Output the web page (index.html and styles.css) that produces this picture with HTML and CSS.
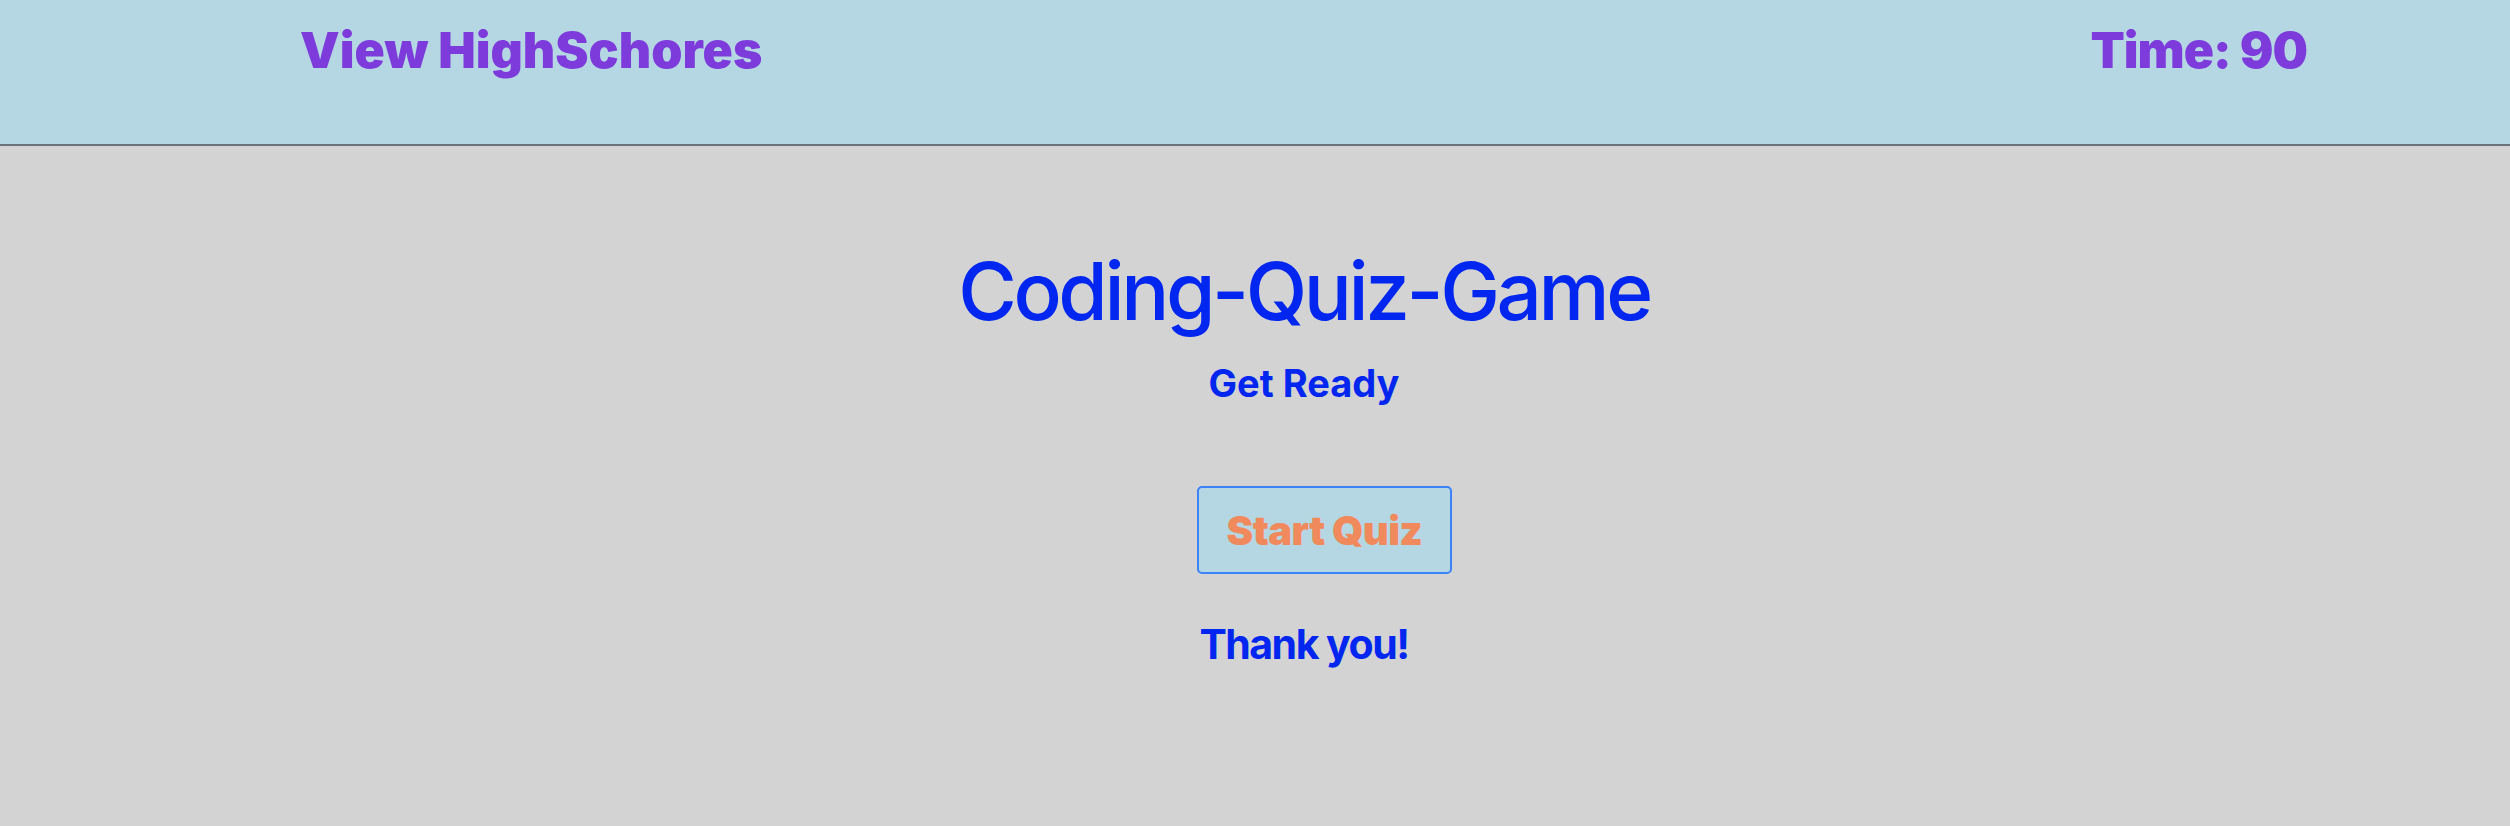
FILE: index.html
```html
<!DOCTYPE html>
<html lang="en">
<head>
<meta charset="utf-8">
<title>Coding-Quiz-Game</title>
<link rel="stylesheet" href="styles.css">
</head>
<body>
<header class="topbar">
  <a class="highscores" href="#">View HighSchores</a>
  <span class="timer">Time: 90</span>
</header>
<main class="stage">
  <h1 class="title">Coding-Quiz-Game</h1>
  <h2 class="subtitle">Get Ready</h2>
  <div class="quiz">
    <button class="start-btn" type="button">Start Quiz</button>
    <p class="thanks">Thank you!</p>
  </div>
</main>
</body>
</html>
```
FILE: styles.css
```css
html, body {
  margin: 0;
  padding: 0;
}
body {
  background: #d3d3d3;
  font-family: Inter, "Noto Sans", sans-serif;
  min-height: 826px;
}
.topbar {
  display: flex;
  justify-content: space-between;
  align-items: flex-start;
  height: 146px;
  box-sizing: border-box;
  padding: 20px 203px 0 300px;
  background: #b5d7e3;
  border-bottom: 2px solid #6b7079;
}
.highscores, .timer {
  font-size: 50px;
  font-weight: 900;
  color: #7d3bdc;
  text-decoration: none;
  line-height: normal;
}
.timer {
  letter-spacing: -1px;
}
.stage {
  padding-left: 98px;
  text-align: center;
  color: #0026f0;
}
.title {
  margin: 96px 0 0;
  font-size: 80px;
  font-weight: 500;
  letter-spacing: -3.4px;
  line-height: normal;
}
.subtitle {
  margin: 21px 0 0;
  font-size: 38px;
  font-weight: 700;
  line-height: normal;
}
.quiz {
  margin-top: 80px;
}
.start-btn {
  display: inline-block;
  box-sizing: border-box;
  width: 255px;
  height: 88px;
  margin-left: 41px;
  padding: 0;
  background: #b5d7e3;
  border: 2px solid #3b82f6;
  border-radius: 5px;
  color: #f08a5d;
  font-family: Inter, "Noto Sans", sans-serif;
  font-size: 40px;
  font-weight: 900;
  letter-spacing: -0.6px;
  line-height: normal;
  vertical-align: top;
}
.thanks {
  margin: 45px 0 0;
  font-size: 41px;
  font-weight: 700;
  letter-spacing: -1.5px;
  line-height: normal;
}
```
